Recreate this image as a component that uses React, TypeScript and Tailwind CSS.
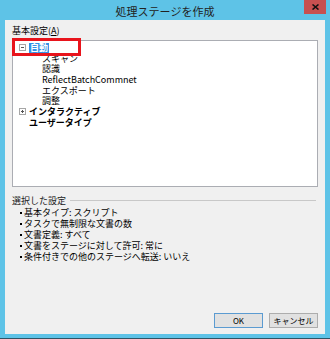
import React from 'react';

const children = ['スキャン', '認識', 'ReflectBatchCommnet', 'エクスポート', '調整'];

const settings = [
  '基本タイプ: スクリプト',
  'タスクで無制限な文書の数',
  '文書定義: すべて',
  '文書をステージに対して許可: 常に',
  '条件付きでの他のステージへ転送: いいえ',
];

const ToggleBox = ({ open }: { open: boolean }) => (
  <div className="w-[7px] h-[7px] border border-[#a6a6a6] bg-white flex items-center justify-center relative">
    <div className="w-[3px] h-px bg-[#555]" />
    {!open && <div className="absolute w-px h-[3px] bg-[#555]" />}
  </div>
);

export default function App() {
  return (
    <div
      className="w-[330px] h-[339px] bg-[#5ec3e7] border-b border-[#2e5566] flex flex-col text-black"
      style={{ fontFamily: '"Noto Sans CJK JP", "Noto Sans", sans-serif' }}
    >
      {/* Title bar */}
      <div className="h-[20px] relative flex items-center justify-center">
        <span className="text-[11px] leading-none text-[#222] mt-[3px]">処理ステージを作成</span>
        <div className="absolute right-[4px] top-0 w-[22px] h-[14px] bg-[#c75050] flex items-center justify-center">
          <svg width="7" height="6" viewBox="0 0 7 6">
            <path d="M0.5 0.5 L6.5 5.5 M6.5 0.5 L0.5 5.5" stroke="#111" strokeWidth="1.6" />
          </svg>
        </div>
      </div>

      {/* Client area */}
      <div className="mx-[5px] mb-[4px] flex-1 bg-[#f0f0f0] flex flex-col px-[7px] pt-[5px] pb-[6px]">
        <div className="text-[9px] leading-[12px]">
          基本設定(<span className="underline">A</span>)
        </div>

        {/* Tree */}
        <div className="mt-[3px] h-[147px] bg-white border border-[#abadb3] relative pt-[1px]">
          <div className="flex items-center h-[11px]">
            <div className="ml-[6px] mr-[3px]">
              <ToggleBox open />
            </div>
            <span className="bg-[#3390e6] text-white font-bold text-[9px] leading-[10px] px-[1px]">自動</span>
          </div>
          {children.map(c => (
            <div key={c} className="h-[10.6px] flex items-center pl-[29px] text-[9px] leading-none">
              {c}
            </div>
          ))}
          <div className="flex items-center h-[11px] mt-[0.5px]">
            <div className="ml-[6px] mr-[3px]">
              <ToggleBox open={false} />
            </div>
            <span className="font-bold text-[9px] leading-none">インタラクティブ</span>
          </div>
          <div className="flex items-center h-[11px] pl-[16px]">
            <span className="font-bold text-[9px] leading-none">ユーザータイプ</span>
          </div>

          {/* highlight annotation */}
          <div className="absolute left-[-1px] top-[-3px] w-[69px] h-[18px] border-[3px] border-[#e8141c]" />
        </div>

        {/* Selected settings */}
        <div className="mt-[7px] flex items-center gap-[4px] h-[12px]">
          <span className="text-[9px] leading-none text-[#222]">選択した設定</span>
          <div className="flex-1 h-px bg-[#c8c8c8] mr-[2px]" />
        </div>
        <div className="mt-[1px] pl-[8px]">
          {settings.map(s => (
            <div key={s} className="h-[11px] flex items-center gap-[2px] text-[9px] leading-none">
              <span className="w-[2px] h-[2px] bg-black" />
              <span>{s}</span>
            </div>
          ))}
        </div>

        {/* Buttons */}
        <div className="mt-auto flex justify-end gap-[6px]">
          <button className="w-[49px] h-[15px] bg-[#e1e1e1] border border-[#5b9bd1] text-[8px] leading-none">
            OK
          </button>
          <button className="w-[49px] h-[15px] bg-[#e1e1e1] border border-[#adadad] text-[8px] leading-none">
            キャンセル
          </button>
        </div>
      </div>
    </div>
  );
}
